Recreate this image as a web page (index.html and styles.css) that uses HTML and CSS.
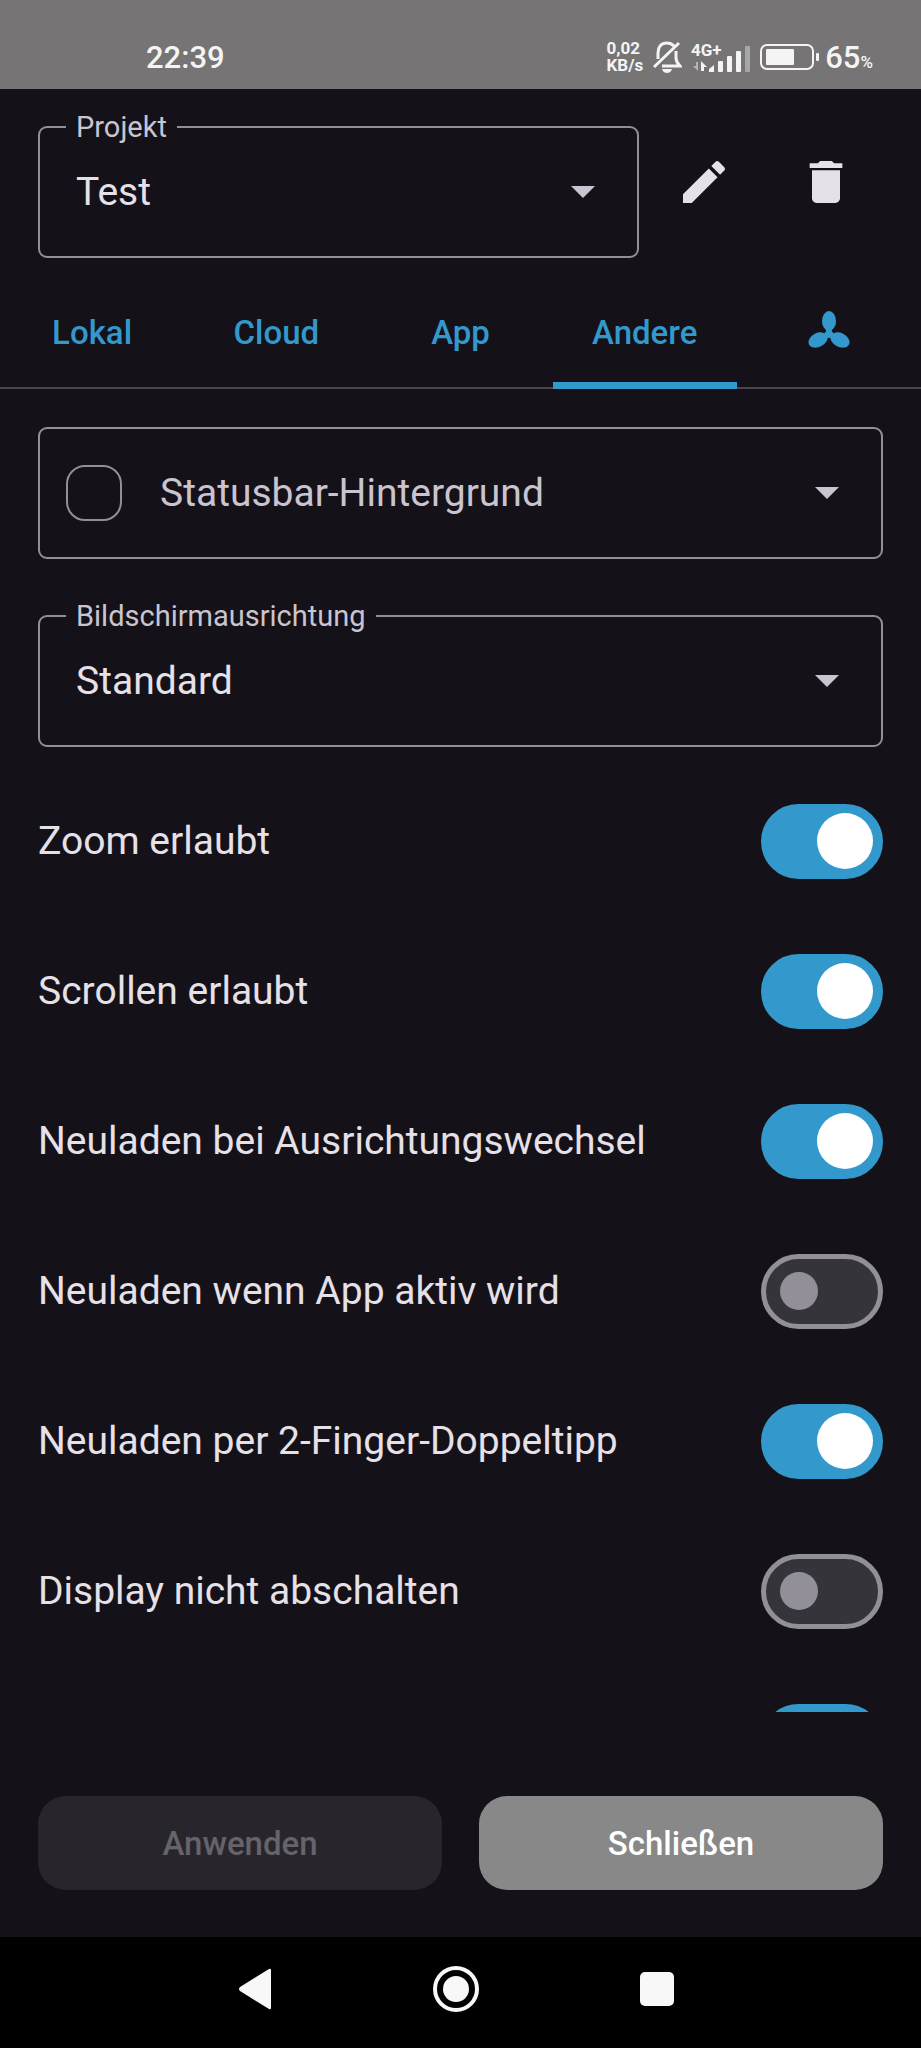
FILE: index.html
```
<!DOCTYPE html>
<html lang="de">
  <head>
    <title>Projekt-Einstellungen</title>
    <meta charset="utf-8">
    <meta name="viewport" content="width=device-width, initial-scale=1">
    <link rel="stylesheet" href="styles.css">
  </head>
<body>
<header class="statusbar">
  <span class="clock">22:39</span>
  <div class="indicators">
    <span class="netspeed">0,02<br>KB/s</span>
    <svg class="bell" width="30" height="34" viewBox="0 0 30 34" fill="none" stroke="currentColor" stroke-width="3">
      <path d="M6 19V13C6 7 9 3 15 3c3 0 5 1 7 3M24 11v7c0 3 2 6 4 8H10M2 27L27 3"/>
      <path d="M10 29h10c-1 3-3 4-5 4s-4-1-5-4z" fill="currentColor" stroke="none"/>
    </svg>
    <svg class="signal" width="60" height="38" viewBox="0 -4 60 38" fill="currentColor">
      <text x="0" y="14">4G+</text>
      <path d="M5 20h2v9l-5-5h3z" opacity=".5"/>
      <path d="M10 29V19l6 6h-3v4z"/>
      <path d="M18 30v-3l5-4v7z"/>
      <rect x="27" y="19" width="5" height="11" rx="1"/>
      <rect x="36" y="14" width="5" height="16" rx="1"/>
      <rect x="45" y="9" width="5" height="21" rx="1"/>
      <rect x="54" y="4" width="5" height="26" rx="1" opacity=".4"/>
    </svg>
    <svg class="battery" width="60" height="26" viewBox="0 0 60 26">
      <rect x="1" y="1" width="52" height="24" rx="6" fill="none" stroke="currentColor" stroke-width="2"/>
      <rect x="6" y="5" width="28" height="16" rx="1" fill="currentColor"/>
      <rect x="56" y="9" width="3" height="8" rx="1" fill="currentColor"/>
    </svg>
    <span class="percent">65<small>%</small></span>
  </div>
</header>

<main class="content">
  <div class="project">
    <fieldset class="field">
      <legend><label for="project">Projekt</label></legend>
      <div class="dropdown">
        <select id="project"><option>Test</option></select>
        <svg class="arrow" width="24" height="12" viewBox="0 0 24 12"><path d="M0 0h24L12 12z"/></svg>
      </div>
    </fieldset>
    <div class="actions">
      <button class="icon-button" aria-label="Bearbeiten">
        <svg width="56" height="56" viewBox="0 0 24 24"><path d="M3 17.25V21h3.75L17.81 9.94l-3.75-3.75L3 17.25zM20.71 7.04c.39-.39.39-1.02 0-1.41l-2.34-2.34c-.39-.39-1.02-.39-1.41 0l-1.83 1.83 3.75 3.75 1.83-1.83z"/></svg>
      </button>
      <button class="icon-button" aria-label="Löschen">
        <svg width="56" height="56" viewBox="0 0 24 24"><path d="M6 19c0 1.1.9 2 2 2h8c1.1 0 2-.9 2-2V7H6v12zM19 4h-3.5l-1-1h-5l-1 1H5v2h14V4z"/></svg>
      </button>
    </div>
  </div>

  <nav class="tabs">
    <a href="#lokal">Lokal</a>
    <a href="#cloud">Cloud</a>
    <a href="#app">App</a>
    <a href="#andere" class="active">Andere</a>
    <a href="#fan" aria-label="Lüfter">
      <svg width="42" height="44" viewBox="0 0 42 44" fill="currentColor">
        <ellipse cx="21" cy="10" rx="7" ry="10"/>
        <ellipse cx="10" cy="29" rx="7" ry="10" transform="rotate(64 10 29)"/>
        <ellipse cx="32" cy="29" rx="7" ry="10" transform="rotate(-64 32 29)"/>
        <path d="M18 16h6c-1 5 1 6 5 9l-4 4c-2-3-6-3-8 0l-4-4c4-3 6-4 5-9z"/>
      </svg>
    </a>
  </nav>

  <div class="settings">
    <div class="field color">
      <input type="checkbox" id="statusbar-on" aria-label="Statusbar-Hintergrund aktiv">
      <div class="dropdown">
        <select aria-label="Statusbar-Hintergrund"><option>Statusbar-Hintergrund</option></select>
        <svg class="arrow" width="24" height="12" viewBox="0 0 24 12"><path d="M0 0h24L12 12z"/></svg>
      </div>
    </div>
    <fieldset class="field">
      <legend><label for="orientation">Bildschirmausrichtung</label></legend>
      <div class="dropdown">
        <select id="orientation"><option>Standard</option></select>
        <svg class="arrow" width="24" height="12" viewBox="0 0 24 12"><path d="M0 0h24L12 12z"/></svg>
      </div>
    </fieldset>
    <div class="switches">
      <label class="row">Zoom erlaubt <input type="checkbox" class="switch" checked></label>
      <label class="row">Scrollen erlaubt <input type="checkbox" class="switch" checked></label>
      <label class="row">Neuladen bei Ausrichtungswechsel <input type="checkbox" class="switch" checked></label>
      <label class="row">Neuladen wenn App aktiv wird <input type="checkbox" class="switch"></label>
      <label class="row">Neuladen per 2-Finger-Doppeltipp <input type="checkbox" class="switch" checked></label>
      <label class="row">Display nicht abschalten <input type="checkbox" class="switch"></label>
      <label class="row"><input type="checkbox" class="switch" aria-label="Weitere Option" checked></label>
    </div>
  </div>
</main>

<footer class="buttons">
  <button disabled>Anwenden</button>
  <button class="close">Schließen</button>
</footer>

<nav class="navbar">
  <button aria-label="Zurück"><svg width="48" height="48" viewBox="0 0 48 48"><path d="M9 22Q7 24 9 26L38 44q2 1 2-1V5q0-2-2-1z"/></svg></button>
  <button aria-label="Startseite"><svg width="48" height="48" viewBox="0 0 48 48"><circle cx="24" cy="24" r="21" fill="none" stroke="#f8f8f8" stroke-width="4"/><circle cx="24" cy="24" r="13"/></svg></button>
  <button aria-label="Übersicht"><svg width="48" height="48" viewBox="0 0 48 48"><rect x="7" y="7" width="34" height="34" rx="5"/></svg></button>
</nav>
</body>
</html>
```
FILE: styles.css
```
* {
  box-sizing: border-box;
}
body {
  display: flex;
  flex-direction: column;
  height: 100vh;
  margin: 0;
  background-color: #141218;
  color: #e6e0e9;
  font-family: Roboto, sans-serif;
  font-size: 39px;
}
button, select {
  font: inherit;
  color: inherit;
  border: none;
  background: none;
  padding: 0;
}
svg {
  display: block;
}

/* status bar */
.statusbar {
  display: flex;
  justify-content: space-between;
  align-items: center;
  height: 89px;
  flex: none;
  padding: 25px 48px 0 146px;
  background-color: #767474;
  color: #f4f4f4;
}
.clock {
  font-size: 31px;
  font-weight: 500;
}
.indicators {
  display: flex;
  align-items: center;
  gap: 9px;
}
.netspeed {
  font-size: 17px;
  line-height: 17px;
  font-weight: 700;
}
.signal text {
  font-size: 17px;
  font-weight: 700;
}
.percent {
  margin-left: -4px;
  font-size: 31px;
  font-weight: 500;
}
.percent small {
  font-size: 17px;
}

/* content */
.content {
  display: flex;
  flex-direction: column;
  flex: 1;
  min-height: 0;
  padding-top: 22px;
}
.project {
  display: flex;
  padding: 0 38px;
}
.project .field {
  flex: 1;
}
.actions {
  display: flex;
  gap: 28px;
  padding: 24px 10px 0 18px;
}
.icon-button {
  display: flex;
  align-items: center;
  justify-content: center;
  width: 94px;
  height: 94px;
  fill: #e6e0e9;
}

/* outlined fields */
.field {
  min-width: 0;
  margin: 0;
  padding: 0 42px 15px 26px;
  border: 2px solid #938f99;
  border-radius: 9px;
}
.field legend {
  padding: 0 10px;
  font-size: 29px;
  line-height: 32px;
  color: #cac4d0;
}
.dropdown {
  display: grid;
  flex: 1;
  align-items: center;
}
.dropdown select {
  grid-area: 1 / 1;
  width: 100%;
  height: 98px;
  padding-left: 10px;
  appearance: none;
}
.arrow {
  grid-area: 1 / 1;
  justify-self: end;
  fill: #cac4d0;
  pointer-events: none;
}
.color {
  display: flex;
  align-items: center;
  gap: 28px;
  height: 132px;
  padding-bottom: 0;
  color: #cac4d0;
}
.color input {
  appearance: none;
  width: 56px;
  height: 56px;
  margin: 0;
  border: 2px solid #938f99;
  border-radius: 19px;
}

/* tabs */
.tabs {
  display: flex;
  flex: none;
  height: 113px;
  margin-top: 18px;
  box-shadow: inset 0 -2px #49454f;
}
.tabs a {
  display: flex;
  flex: 1;
  align-items: center;
  justify-content: center;
  padding-top: 7px;
  border-bottom: 7px solid transparent;
  color: #3399cc;
  font-size: 33px;
  font-weight: 500;
  text-decoration: none;
}
.tabs a.active {
  border-color: #3399cc;
}

/* settings */
.settings {
  display: flex;
  flex-direction: column;
  flex: 1;
  gap: 41px;
  min-height: 0;
  padding: 38px 38px 0;
  overflow: auto;
  scrollbar-width: none;
}
.settings > * {
  flex: none;
}
.switches {
  margin-top: -22px;
}
.row {
  display: flex;
  align-items: center;
  justify-content: space-between;
  height: 150px;
}
.row .switch:only-child {
  margin-left: auto;
}
.switch {
  display: flex;
  align-items: center;
  appearance: none;
  width: 122px;
  height: 75px;
  margin: 0;
  padding-left: 14px;
  border: 5px solid #938f99;
  border-radius: 38px;
  background-color: #36343b;
}
.switch::before {
  content: "";
  width: 38px;
  height: 38px;
  border-radius: 50%;
  background-color: #938f99;
}
.switch:checked {
  justify-content: flex-end;
  padding: 0 5px 0 0;
  border-color: #3399cc;
  background-color: #3399cc;
}
.switch:checked::before {
  width: 56px;
  height: 56px;
  background-color: #fff;
}

/* footer */
.buttons {
  display: flex;
  flex: none;
  gap: 37px;
  padding: 84px 38px 47px;
}
.buttons button {
  flex: 1;
  height: 94px;
  border-radius: 28px;
  font-size: 33px;
  font-weight: 500;
}
.buttons button:disabled {
  background-color: #28262c;
  color: #66636a;
}
.buttons .close {
  background-color: #888;
  color: #fff;
}
.navbar {
  display: flex;
  flex: none;
  align-items: center;
  justify-content: center;
  gap: 153px;
  height: 111px;
  padding: 0 9px 7px 0;
  background-color: #000;
  fill: #f8f8f8;
}
```
